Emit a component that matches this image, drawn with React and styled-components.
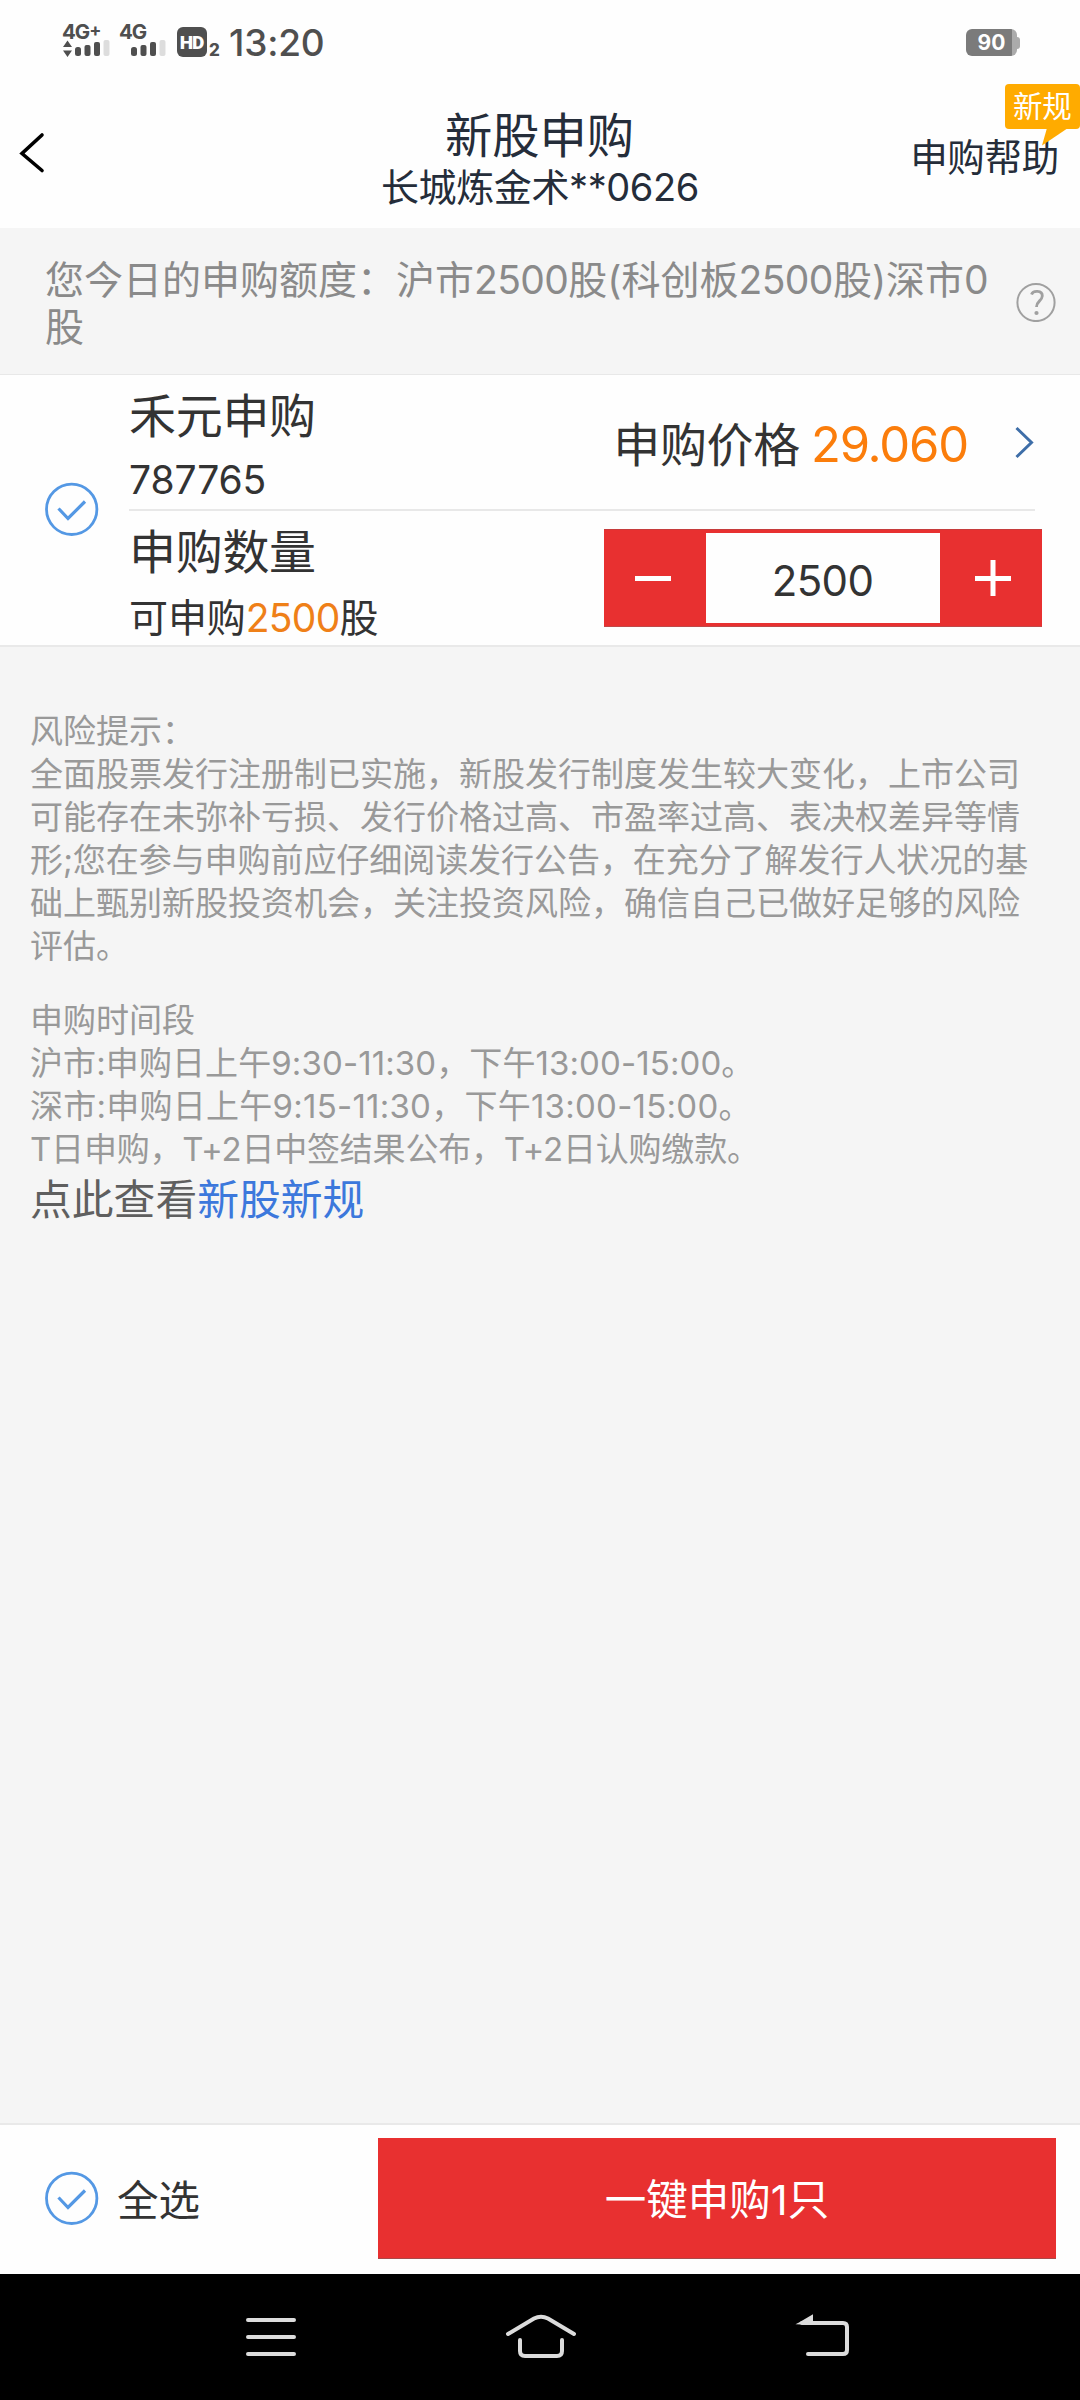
import React, { useState } from 'react';
import styled, { createGlobalStyle } from 'styled-components';


const GlobalStyle = createGlobalStyle`
    * { box-sizing: border-box; }
    body {
        margin: 0;
        background: #f5f5f5;
        font-family: Inter, 'Noto Sans CJK SC', sans-serif;
        color: #333333;
    }
    svg { display: block; flex: none; }
`;

const Screen = styled.div`
    display: flex;
    flex-direction: column;
    width: 1080px;
    height: 2400px;
    background: #f5f5f5;
`;

const StatusBar = styled.div`
    display: flex;
    justify-content: space-between;
    height: 84px;
    padding: 24px 60px 0 62px;
    background: #fefefe;
    color: #4f4f4f;
`;
const StatusGroup = styled.div`
    display: flex;
    align-items: flex-start;
`;
const Signal = styled.div`
    width: ${({ $width }) => $width}px;
    font-size: 20.5px;
    font-weight: 700;
    line-height: 16px;
    letter-spacing: -1px;
`;
const Plus = styled.sup`
    font-size: 18px;
    line-height: 0;
    vertical-align: 3px;
`;
const HdBadge = styled.div`
    width: 30px;
    height: 30px;
    margin-top: 3px;
    border-radius: 6px;
    background: #4f4f4f;
    color: #ffffff;
    font-family: Roboto, sans-serif;
    font-size: 19px;
    font-weight: 900;
    line-height: 31px;
    text-align: center;
    letter-spacing: -1px;
    text-indent: -1px;
`;
const SimIndex = styled.span`
    width: 22px;
    padding: 18px 0 0 2px;
    font-size: 17px;
    font-weight: 800;
    line-height: 17px;
`;
const Clock = styled.span`
    padding-top: 1px;
    font-size: 37px;
    font-weight: 450;
    line-height: 36px;
    letter-spacing: -0.2px;
`;
const Battery = styled.div`
    display: flex;
    align-items: center;
    height: 27px;
    margin-top: 5px;
`;
const BatteryBody = styled.div`
    width: 51px;
    height: 27px;
    padding-right: 5px;
    border-radius: 6px;
    background: linear-gradient(to right, #7b7b7b 46px, #ababab 46px);
    color: #ffffff;
    font-size: 21px;
    font-weight: 700;
    line-height: 27px;
    text-align: center;
    text-indent: 5px;
`;
const BatteryTip = styled.div`
    width: 3px;
    height: 12px;
    border-radius: 0 3px 3px 0;
    background: #ababab;
`;

const Header = styled.div`
    display: flex;
    justify-content: space-between;
    height: 144px;
    background: #fefefe;
    color: #252d3a;
`;
const BackButton = styled.div`
    width: 180px;
    padding: 48px 0 0 19px;
`;
const TitleWrapper = styled.div`
    padding-top: 23px;
    text-align: center;
`;
const Title = styled.div`
    padding-right: 1px;
    font-size: 47.3px;
    line-height: 57px;
`;
const Account = styled.div`
    font-size: 38px;
    line-height: 47px;
    letter-spacing: -0.4px;
`;
const HelpLink = styled.div`
    position: relative;
    width: 180px;
    padding: 50px 21px 0 0;
    font-size: 37.5px;
    line-height: 47px;
    text-align: right;
    white-space: nowrap;
    letter-spacing: -0.3px;
`;
const NewRuleTag = styled.div`
    position: absolute;
    top: 0;
    right: 0;
    width: 75px;
    height: 45px;
    padding-left: 8px;
    border-radius: 4px;
    background: #ffab00;
    color: #ffffff;
    font-size: 29.5px;
    line-height: 45px;
    text-align: left;
`;
const TagTail = styled.svg`
    position: absolute;
    top: 44px;
    left: 37px;
`;

const Quota = styled.div`
    display: flex;
    align-items: center;
    justify-content: space-between;
    height: 147px;
    padding: 2px 24px 0 45px;
    border-bottom: 1px solid #e8e8e8;
`;
const QuotaText = styled.div`
    width: 955px;
    padding-top: 2px;
    color: #8a8a8a;
    font-size: 39px;
    line-height: 47px;
`;
const QuotaAmount = styled.span`
    letter-spacing: -0.6px;
`;

const StockCard = styled.div`
    display: flex;
    align-items: center;
    height: 272px;
    padding: 0 38px 2px 45px;
    border-bottom: 2px solid #e9e9e9;
    background: #fefefe;
`;
const CardRows = styled.div`
    flex: 1;
    margin-left: 30px;
`;
const CardRow = styled.div`
    display: flex;
    justify-content: space-between;
    height: ${({ $height }) => $height}px;
`;
const Divider = styled.div`
    height: 2px;
    margin-right: 7px;
    background: #e8e8e8;
`;
const RowName = styled.div`
    padding-top: ${({ $top }) => $top}px;
    font-size: 47px;
    line-height: 64px;
    letter-spacing: -0.3px;
`;
const RowNote = styled.div`
    padding-top: ${({ $top }) => $top}px;
    font-size: 39px;
    line-height: 64px;
    letter-spacing: -0.1px;
`;
const Amount = styled.span`
    color: #ef8018;
    letter-spacing: -0.7px;
`;
const PriceWrapper = styled.div`
    display: flex;
    padding: 39px 8px 0 0;
    font-size: 47px;
    line-height: 64px;
    letter-spacing: -0.3px;
`;
const Price = styled.span`
    width: 214px;
    padding-left: 11px;
    color: #fb7d0b;
    font-size: 49px;
    letter-spacing: -1.2px;
`;
const PriceArrow = styled.svg`
    margin-top: 12px;
`;

const Stepper = styled.div`
    display: flex;
    width: 438px;
    height: 98px;
    margin-top: 18px;
    border-top: 1px solid #c63c3c;
    border-bottom: 1px solid #c04848;
    background: #e83030;
`;
const StepButton = styled.div`
    display: flex;
    align-items: center;
    justify-content: center;
    width: 102px;
    padding: ${({ $side }) => ($side === 'left' ? '0 4px 0 0' : '0 0 0 4px')};
`;
const StepValue = styled.div`
    flex: 1;
    margin: 3px 0;
    padding-right: 1px;
    background: #fefefe;
    font-size: 42px;
    line-height: 95px;
    letter-spacing: -0.6px;
    text-align: center;
`;

const Notes = styled.div`
    flex: 1;
    padding: 63px 48px 0 30px;
    color: #999999;
    font-size: 33px;
    line-height: 43px;
`;
const NoteLine = styled.div`
    white-space: nowrap;
    letter-spacing: ${({ $spacing }) => $spacing || 0}px;
`;
const NoteBlock = styled.div`
    margin-bottom: 31px;
`;
const RuleLine = styled.div`
    color: #5f5f5f;
    font-size: 41.8px;
    line-height: 58px;
`;
const RuleLink = styled.span`
    color: #3c78dc;
`;

const Footer = styled.div`
    display: flex;
    justify-content: space-between;
    height: 151px;
    padding: 13px 24px 0 45px;
    border-top: 2px solid #e9e9e9;
    background: #fefefe;
`;
const SelectAll = styled.div`
    display: flex;
    align-items: center;
    gap: 18px;
    height: 119px;
    font-size: 41.5px;
`;
const SubmitButton = styled.div`
    width: 678px;
    height: 121px;
    border-bottom: 1px solid #a84a4a;
    background: #e83030;
    color: #ffffff;
    font-size: 41.5px;
    line-height: 124px;
    text-align: center;
`;

const SystemNav = styled.div`
    height: 126px;
    background: #000000;
`;

const SignalBars = ({ arrows }) => (
    <svg width="48" height="18" viewBox="0 0 48 18">
        {arrows && <path d="M5.5 0.5 L10 7 H1 Z M5.5 17 L10 10.5 H1 Z" fill="#4f4f4f" />}
        <g transform={arrows ? '' : 'translate(-1 0)'} fill="#4f4f4f">
            <rect x="13" y="7" width="6" height="9" rx="2.5" />
            <rect x="22.5" y="5" width="6" height="11" rx="2" />
            <rect x="32" y="2" width="6" height="14" rx="2" />
            <rect x="41.5" y="0" width="6" height="16" rx="2" fill="#dddddd" />
        </g>
    </svg>
);

const CheckCircle = ({ checked, onClick }) => (
    <svg width="54" height="54" viewBox="0 0 54 54" fill="none" stroke="#5498e4" onClick={onClick}>
        <circle cx="26.7" cy="27.3" r="25.2" strokeWidth="2.8" />
        {checked && <path d="M13.5 26.5 L23 36.5 L40 19.5" strokeWidth="3.2" />}
    </svg>
);

const App = () => {
    const [checked, setChecked] = useState(true);
    const [count, setCount] = useState(2500);

    return (
        <Screen>
            <GlobalStyle />
            <StatusBar>
                <StatusGroup>
                    <Signal $width={57}>4G<Plus>+</Plus><SignalBars arrows /></Signal>
                    <Signal $width={58}>4G<SignalBars /></Signal>
                    <HdBadge>HD</HdBadge>
                    <SimIndex>2</SimIndex>
                    <Clock>13:20</Clock>
                </StatusGroup>
                <Battery>
                    <BatteryBody>90</BatteryBody>
                    <BatteryTip />
                </Battery>
            </StatusBar>

            <Header>
                <BackButton>
                    <svg width="26" height="42" viewBox="0 0 26 42" fill="none" stroke="#000000" strokeWidth="3.6">
                        <path d="M23 3 L3 21.5 L23 38.5" strokeLinecap="round" />
                    </svg>
                </BackButton>
                <TitleWrapper>
                    <Title>新股申购</Title>
                    <Account>长城炼金术**0626</Account>
                </TitleWrapper>
                <HelpLink>
                    申购帮助
                    <NewRuleTag>
                        新规
                        <TagTail width="26" height="18" viewBox="0 0 26 18">
                            <path d="M5 0 H26 L0 17.5 Z" fill="#ffab00" />
                        </TagTail>
                    </NewRuleTag>
                </HelpLink>
            </Header>

            <Quota>
                <QuotaText>
                    您今日的申购额度：沪市<QuotaAmount>2500</QuotaAmount>股(科创板<QuotaAmount>2500</QuotaAmount>股)深市0股
                </QuotaText>
                <svg width="40" height="40" viewBox="0 0 40 40" fill="none" stroke="#a0a0a0">
                    <circle cx="20" cy="20.5" r="18.6" strokeWidth="2" />
                    <path d="M15.5 12.5 C17 8 26.5 8 26.3 14 C26 19 20.5 19 20.5 25" strokeWidth="2.8" />
                    <circle cx="20.5" cy="31" r="2.1" fill="#a0a0a0" stroke="none" />
                </svg>
            </Quota>

            <StockCard>
                <CheckCircle checked={checked} onClick={() => setChecked(!checked)} />
                <CardRows>
                    <CardRow $height={135}>
                        <div>
                            <RowName $top={10}>禾元申购</RowName>
                            <RowNote $top={0}>787765</RowNote>
                        </div>
                        <PriceWrapper>
                            申购价格
                            <Price>29.060</Price>
                            <PriceArrow width="20" height="34" viewBox="0 0 20 34" fill="none" stroke="#3e6ea8" strokeWidth="3">
                                <path d="M2.5 3 L17.5 17.5 L2.5 32" />
                            </PriceArrow>
                        </PriceWrapper>
                    </CardRow>
                    <Divider />
                    <CardRow $height={133}>
                        <div>
                            <RowName $top={9}>申购数量</RowName>
                            <RowNote $top={2}>可申购<Amount>2500</Amount>股</RowNote>
                        </div>
                        <Stepper>
                            <StepButton $side="left" onClick={() => setCount(count - 500)}>
                                <svg width="36" height="36" viewBox="0 0 36 36" stroke="#ffffff" strokeWidth="5">
                                    <path d="M0 18.5 H36" />
                                </svg>
                            </StepButton>
                            <StepValue>{count}</StepValue>
                            <StepButton $side="right" onClick={() => setCount(count + 500)}>
                                <svg width="36" height="36" viewBox="0 0 36 36" stroke="#ffffff" strokeWidth="5">
                                    <path d="M0 18.5 H36 M18 0 V36" />
                                </svg>
                            </StepButton>
                        </Stepper>
                    </CardRow>
                </CardRows>
            </StockCard>

            <Notes>
                <NoteBlock>
                    <NoteLine>风险提示：</NoteLine>
                    <NoteLine>全面股票发行注册制已实施，新股发行制度发生较大变化，上市公司</NoteLine>
                    <NoteLine>可能存在未弥补亏损、发行价格过高、市盈率过高、表决权差异等情</NoteLine>
                    <NoteLine $spacing={-0.06}>形;您在参与申购前应仔细阅读发行公告，在充分了解发行人状况的基</NoteLine>
                    <NoteLine>础上甄别新股投资机会，关注投资风险，确信自己已做好足够的风险</NoteLine>
                    <NoteLine>评估。</NoteLine>
                </NoteBlock>
                <NoteLine>申购时间段</NoteLine>
                <NoteLine $spacing={0.1}>沪市:申购日上午9:30-11:30，下午13:00-15:00。</NoteLine>
                <NoteLine $spacing={0.25}>深市:申购日上午9:15-11:30，下午13:00-15:00。</NoteLine>
                <NoteLine $spacing={-0.2}>T日申购，T+2日中签结果公布，T+2日认购缴款。</NoteLine>
                <RuleLine>点此查看<RuleLink>新股新规</RuleLink></RuleLine>
            </Notes>

            <Footer>
                <SelectAll>
                    <CheckCircle checked={checked} onClick={() => setChecked(!checked)} />
                    全选
                </SelectAll>
                <SubmitButton>一键申购1只</SubmitButton>
            </Footer>

            <SystemNav>
                <svg width="1080" height="126" viewBox="0 0 1080 126" fill="none" stroke="#dcdcdc" strokeWidth="4" strokeLinecap="round">
                    <path d="M248 46 H294 M248 63 H294 M248 80 H294" />
                    <path d="M508 60 L534 44.5 Q541 41 548 44.5 L574 60" />
                    <path d="M520 66 V77 Q520 82 525 82 H557 Q562 82 562 77 V66" />
                    <path d="M802 49 H843 Q847 49 847 53 V76 Q847 80 843 80 H808" />
                    <path d="M799 49.5 L812 42 V50 Z" fill="#dcdcdc" strokeWidth="2" />
                </svg>
            </SystemNav>
        </Screen>
    );
};

export default App;
